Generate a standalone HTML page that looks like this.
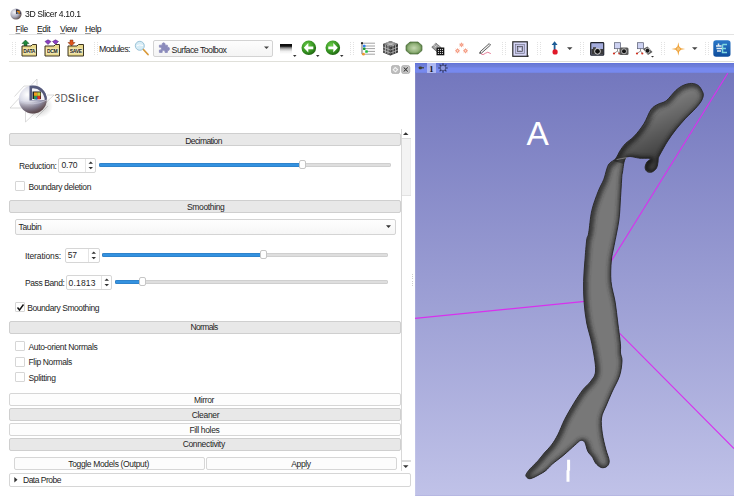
<!DOCTYPE html>
<html><head><meta charset="utf-8">
<style>
html,body{margin:0;padding:0;}
body{width:743px;height:502px;position:relative;overflow:hidden;background:#fff;font-family:"Liberation Sans",sans-serif;color:#1e1e1e;}
.a{position:absolute;}
.t{position:absolute;line-height:10px;font-size:8.5px;white-space:nowrap;letter-spacing:-0.35px;}
.hline{position:absolute;height:1px;background:#e3e3e3;}
.grip{position:absolute;width:4px;height:13px;background:repeating-linear-gradient(90deg,#e2e2e2 0 1px,transparent 1px 3px);-webkit-mask:repeating-linear-gradient(#000 0 1px,transparent 1px 2px);}
.hdr{position:absolute;left:9px;width:389.5px;height:11px;background:#e8e8e8;border:1px solid #cfcfcf;border-radius:2px;}
.btnw{position:absolute;left:9px;width:389.5px;height:11px;background:#fdfdfd;border:1px solid #d6d6d6;border-radius:2px;}
.cb{position:absolute;left:15.2px;width:8px;height:8px;border:1px solid #d6d6d6;background:#fff;border-radius:1px;}
.spin{position:absolute;height:13px;border:1px solid #d6d6d6;border-radius:2px;background:#fff;}
.groove{position:absolute;height:3.7px;background:#dedede;box-shadow:inset 0 0 0 0.7px #cacaca;border-radius:2px;}
.fill{position:absolute;height:3.7px;background:#3492e0;box-shadow:inset 0 0 0 0.6px #2a74b8;border-radius:2px;}
.handle{position:absolute;width:5px;height:7.2px;background:#fff;border:1px solid #c6c6c6;border-radius:2px;}
.u{text-decoration:underline;text-decoration-color:#9a9a9a;text-underline-offset:1px;}
</style></head><body>

<!-- title bar -->
<svg class="a" style="left:10px;top:8px" width="13" height="12" viewBox="0 0 13 12">
<defs><radialGradient id="sg" cx="0.35" cy="0.35" r="0.7"><stop offset="0" stop-color="#f4f4f8"/><stop offset="0.6" stop-color="#a8a8b8"/><stop offset="1" stop-color="#5a4a48"/></radialGradient></defs>
<circle cx="6" cy="6" r="5.6" fill="url(#sg)"/>
<path d="M6 6 L6 1.2 A4.8 4.8 0 0 1 10.8 6Z" fill="#2a2a40"/>
<rect x="6.8" y="2.8" width="3" height="3" fill="#e08a20"/><rect x="6.8" y="4.3" width="1.5" height="1.5" fill="#3070c0"/>
</svg>
<div class="t" style="left:25px;top:9.2px;font-size:9.6px;letter-spacing:-0.4px;color:#111;transform:scaleX(0.9);transform-origin:0 0">3D Slicer 4.10.1</div>

<!-- menu -->
<div class="t" style="left:15.5px;top:23.5px;color:#111"><span class="u">F</span>ile</div>
<div class="t" style="left:37px;top:23.5px;color:#111"><span class="u">E</span>dit</div>
<div class="t" style="left:60px;top:23.5px;color:#111"><span class="u">V</span>iew</div>
<div class="t" style="left:85px;top:23.5px;color:#111"><span class="u">H</span>elp</div>
<div class="hline" style="left:9px;top:34px;width:725px;"></div>

<!-- toolbar -->
<div class="grip" style="left:12px;top:42px"></div>
<div class="grip" style="left:94px;top:42px"></div>
<div class="grip" style="left:350px;top:42px"></div>
<div class="grip" style="left:502px;top:42px"></div>
<div class="grip" style="left:537px;top:42px"></div>
<div class="grip" style="left:580px;top:42px"></div>
<div class="grip" style="left:661px;top:42px"></div>
<div class="grip" style="left:705px;top:42px"></div>

<!-- DATA icon -->
<svg class="a" style="left:21px;top:39px" width="17" height="18" viewBox="0 0 17 18">
<path d="M4.5 1 L8 4.5 H6 V7 H3 V4.5 H1Z" fill="#1f8a3c" stroke="#0d4a1f" stroke-width="0.5"/>
<path d="M1 7 H10 L11.5 5.5 H15.5 V17 H1Z" fill="#e9d98c" stroke="#3d3520" stroke-width="1"/>
<rect x="2" y="9.5" width="12.5" height="5" fill="#f7efc4"/>
<text x="8.2" y="14" font-size="5" text-anchor="middle" font-family="Liberation Sans" font-weight="bold" fill="#222" letter-spacing="-0.3">DATA</text>
</svg>
<!-- DCM icon -->
<svg class="a" style="left:44px;top:39px" width="17" height="18" viewBox="0 0 17 18">
<path d="M1 2.5 L4 0.8 L7 2.5 L4 5.5Z" fill="#8a3fc0" stroke="#4a1a70" stroke-width="0.5"/>
<path d="M8.5 2.5 L11.5 0.8 L14.5 2.5 L11.5 5.5Z" fill="#8a3fc0" stroke="#4a1a70" stroke-width="0.5"/>
<path d="M1 7 H10 L11.5 5.5 H15.5 V17 H1Z" fill="#e9d98c" stroke="#3d3520" stroke-width="1"/>
<rect x="2" y="9.5" width="12.5" height="5" fill="#f7efc4"/>
<text x="8.2" y="14" font-size="5" text-anchor="middle" font-family="Liberation Sans" font-weight="bold" fill="#222" letter-spacing="-0.3">DCM</text>
</svg>
<!-- SAVE icon -->
<svg class="a" style="left:67px;top:39px" width="18" height="18" viewBox="0 0 18 18">
<path d="M3 1 H6 V3.5 H8 L4.5 7 L1 3.5 H3Z" fill="#e0551b" stroke="#7a2a08" stroke-width="0.5"/>
<path d="M1 7 H10 L11.5 5.5 H16.5 V17 H1Z" fill="#e9d98c" stroke="#3d3520" stroke-width="1"/>
<rect x="2" y="9.5" width="13.5" height="5" fill="#f7efc4"/>
<text x="8.7" y="14" font-size="5" text-anchor="middle" font-family="Liberation Sans" font-weight="bold" fill="#222" letter-spacing="-0.3">SAVE</text>
</svg>
<div class="t" style="left:99px;top:44.3px;font-size:8.8px;letter-spacing:-0.62px">Modules:</div>
<!-- magnifier -->
<svg class="a" style="left:134px;top:40px" width="16" height="16" viewBox="0 0 16 16">
<line x1="8.5" y1="8.5" x2="14" y2="14.5" stroke="#d99a3a" stroke-width="1.8" stroke-linecap="round"/>
<circle cx="5.8" cy="5.8" r="4.5" fill="#d6ecf6" stroke="#9cc4d8" stroke-width="1"/>
<path d="M2.5 6 Q5 4 9 5.5" stroke="#fff" stroke-width="1" fill="none"/>
</svg>
<!-- combo -->
<div class="a" style="left:152.7px;top:40px;width:118.8px;height:15px;border:1px solid #d3d3d3;border-radius:2px;background:linear-gradient(#fdfdfd,#f4f4f4)"></div>
<svg class="a" style="left:158px;top:42px" width="12" height="12" viewBox="0 0 12 12">
<path d="M4.2 1.8 a1.5 1.5 0 0 1 2.8 0 V3.2 H9.4 V5.4 a1.5 1.5 0 1 1 0 2.8 V10.4 H7 a1.5 1.5 0 1 0 -2.8 0 H1.4 V8 a1.5 1.5 0 1 0 0 -2.8 V3.2 H4.2Z" fill="#8a8abb" stroke="#8a8abb" stroke-width="0.8" stroke-linejoin="round"/>
</svg>
<div class="t" style="left:171.6px;top:45px;font-size:8.8px;letter-spacing:-0.54px">Surface Toolbox</div>
<svg class="a" style="left:263.5px;top:46px" width="6" height="4"><path d="M0 0.5 H5 L2.5 3Z" fill="#444"/></svg>
<!-- gradient icon -->
<div class="a" style="left:280px;top:44px;width:12px;height:10px;background:linear-gradient(#0a0a0a 0%,#111 22%,#666 32%,#bbb 50%,#eee 72%,#fff 100%)"></div>
<svg class="a" style="left:292.5px;top:55px" width="4" height="3"><path d="M0 0 H3.5 L1.75 2Z" fill="#333"/></svg>
<!-- green arrows -->
<svg class="a" style="left:301px;top:40px" width="16" height="16" viewBox="0 0 16 16">
<defs><radialGradient id="gg" cx="0.4" cy="0.35" r="0.7"><stop offset="0" stop-color="#6cd04a"/><stop offset="0.7" stop-color="#2f8a1c"/><stop offset="1" stop-color="#1d5a10"/></radialGradient></defs>
<circle cx="7.8" cy="7.8" r="7.3" fill="url(#gg)"/>
<path d="M2.8 7.8 L7.3 3 V6.4 H12.3 V9.2 H7.3 V12.6Z" fill="#fff"/>
</svg>
<svg class="a" style="left:316px;top:55px" width="4" height="3"><path d="M0 0 H3.5 L1.75 2Z" fill="#333"/></svg>
<svg class="a" style="left:324.5px;top:40px" width="16" height="16" viewBox="0 0 16 16">
<circle cx="7.8" cy="7.8" r="7.3" fill="url(#gg)"/>
<path d="M12.8 7.8 L8.3 3 V6.4 H3.3 V9.2 H8.3 V12.6Z" fill="#fff"/>
</svg>
<svg class="a" style="left:339.5px;top:55px" width="4" height="3"><path d="M0 0 H3.5 L1.75 2Z" fill="#333"/></svg>
<!-- tree icon -->
<svg class="a" style="left:360px;top:41px" width="16" height="16" viewBox="0 0 16 16">
<path d="M2 2.2 H15 M4.5 5 H15 M4.5 7.6 H15 M6.5 10.4 H15 M4.5 13.2 H15" stroke="#8a8a8a" stroke-width="0.8" fill="none"/>
<path d="M2 2.2 V13.2 H4" stroke="#333" stroke-width="0.7" fill="none"/>
<circle cx="2" cy="2.2" r="1.1" fill="#222"/>
<rect x="3" y="3.8" width="2.5" height="2.5" rx="0.6" fill="#2f80f0"/>
<rect x="3" y="6.4" width="2.5" height="2.5" rx="0.6" fill="#1e9a30"/>
<rect x="5.2" y="9.2" width="2.6" height="2.6" rx="0.6" fill="#22c040"/>
<circle cx="3.5" cy="13.2" r="1.4" fill="#f09a30"/>
</svg>
<!-- cube -->
<svg class="a" style="left:382px;top:40px" width="17" height="16" viewBox="0 0 17 16">
<path d="M8.5 1 L16 4 V12.5 L8.5 15.5 L1 12.5 V4Z" fill="#3a3a3a"/>
<path d="M8.5 1 L16 4 L8.5 7 L1 4Z" fill="#8a8a8a"/>
<path d="M1 4 L8.5 7 V15.5 L1 12.5Z" fill="#555"/>
<path d="M3.5 5 V13.5 M6 6 V14.5 M11 6 V14.5 M13.5 5 V13.5 M1 7 L8.5 10 L16 7 M1 10 L8.5 13 L16 10 M4.5 2.5 L12 5.5 M12.5 2.5 L5 5.5" stroke="#e6e6e6" stroke-width="0.7" fill="none" opacity="0.75"/>
</svg>
<!-- green octagon -->
<svg class="a" style="left:405px;top:41px" width="18" height="14" viewBox="0 0 18 14">
<defs><radialGradient id="og" cx="0.5" cy="0.5" r="0.6"><stop offset="0" stop-color="#c4d8b0"/><stop offset="0.6" stop-color="#90b078"/><stop offset="1" stop-color="#3e6a2a"/></radialGradient></defs>
<path d="M5 1 H13 L17 4.5 V9.5 L13 13 H5 L1 9.5 V4.5Z" fill="url(#og)" stroke="#4a6a3a" stroke-width="0.7"/>
</svg>
<!-- grid icon -->
<svg class="a" style="left:431px;top:42px" width="14" height="14" viewBox="0 0 14 14">
<path d="M0.8 5.2 L4.8 1 L10 5.5 L6 9.8Z" fill="#9a9a9a" stroke="#444" stroke-width="0.6"/>
<path d="M2.8 3.1 L8 7.6 M4.8 1 L1.8 4.2 M6.6 2.6 L3.6 5.8 M8.3 4 L5.3 7.2" stroke="#eee" stroke-width="0.5"/>
<rect x="5.5" y="5.5" width="7.8" height="7.8" fill="#111"/>
<g fill="#fff"><rect x="6.9" y="6.9" width="1" height="1"/><rect x="8.9" y="6.9" width="1" height="1"/><rect x="10.9" y="6.9" width="1" height="1"/>
<rect x="6.9" y="8.9" width="1" height="1"/><rect x="8.9" y="8.9" width="1" height="1"/><rect x="10.9" y="8.9" width="1" height="1"/>
<rect x="6.9" y="10.9" width="1" height="1"/><rect x="8.9" y="10.9" width="1" height="1"/><rect x="10.9" y="10.9" width="1" height="1"/></g>
</svg>
<!-- sparkles -->
<svg class="a" style="left:454px;top:42px" width="15" height="13" viewBox="0 0 15 13" stroke="#f07858" stroke-width="0.6" fill="none">
<path d="M7.5 0.6 V5.2 M5.2 2.9 H9.8 M5.9 1.3 L9.1 4.5 M9.1 1.3 L5.9 4.5"/>
<path d="M3.5 6.3 V11.3 M1 8.8 H6 M1.7 7 L5.3 10.6 M5.3 7 L1.7 10.6"/>
<path d="M11.5 6.3 V11.3 M9 8.8 H14 M9.7 7 L13.3 10.6 M13.3 7 L9.7 10.6"/>
<circle cx="7.5" cy="2.9" r="1" fill="#fbd8cc"/><circle cx="3.5" cy="8.8" r="1.3" fill="#fbd8cc"/><circle cx="11.5" cy="8.8" r="1.3" fill="#fbd8cc"/>
</svg>
<!-- pen -->
<svg class="a" style="left:478px;top:42px" width="14" height="14" viewBox="0 0 14 14">
<path d="M1.8 10 L11.2 1.6 L12.6 3 L3.2 11.4Z" fill="#f0f0f0" stroke="#222" stroke-width="0.7"/>
<path d="M1.8 10 L3.2 11.4 L1.3 11.8Z" fill="#222"/>
<path d="M3 11.8 Q5 13.8 7.3 11.3 Q9.5 9 12.8 11.6" stroke="#e06080" stroke-width="0.8" fill="none"/>
</svg>
<!-- framed icon -->
<svg class="a" style="left:511.5px;top:40.5px" width="17" height="17" viewBox="0 0 17 17">
<rect x="0.8" y="0.8" width="14.5" height="14.5" fill="#d6d6f6" stroke="#2a2a2a" stroke-width="1.2"/>
<rect x="3.6" y="3.6" width="8.8" height="8.8" fill="#c4c4e6" stroke="#6a6a80" stroke-width="0.6"/>
<rect x="5.6" y="5.6" width="4.8" height="4.8" fill="#b4b4d4" stroke="#333" stroke-width="0.6"/>
<rect x="7.3" y="7.3" width="1.5" height="1.6" fill="#fff"/>
<path d="M14.5 16 H16.5 V14Z" fill="#222"/>
</svg>
<!-- pin icon -->
<svg class="a" style="left:550px;top:41px" width="9" height="14" viewBox="0 0 9 14">
<path d="M4.6 0.3 L7.6 4 H5.5 V9 H3.7 V4 H1.6Z" fill="#1c5c96"/>
<circle cx="5.1" cy="10.9" r="2.6" fill="#e01828"/>
</svg>
<svg class="a" style="left:567px;top:46.5px" width="6" height="4"><path d="M0 0.3 H5.5 L2.75 3Z" fill="#444"/></svg>
<!-- cameras -->
<svg class="a" style="left:590px;top:42px" width="15" height="14" viewBox="0 0 15 14">
<rect x="0.7" y="0.7" width="13" height="12.5" rx="0.8" fill="#a4acdc" stroke="#20242e" stroke-width="1.2"/>
<rect x="1.4" y="7" width="11.6" height="5.6" fill="#3a3a3a"/>
<rect x="3" y="5.2" width="3" height="2" fill="#444"/>
<circle cx="7.5" cy="9.3" r="2.9" fill="#141414" stroke="#e6e6e6" stroke-width="0.9"/>
</svg>
<svg class="a" style="left:612px;top:42px" width="17" height="14" viewBox="0 0 17 14">
<rect x="2.5" y="0.7" width="6" height="6" fill="#cdd2f2" stroke="#555a70" stroke-width="0.7"/>
<path d="M5.5 6.7 V9 M2 11.5 L5.5 9 L7.5 11.5" stroke="#555" stroke-width="0.6" fill="none"/>
<circle cx="2" cy="11.5" r="1.1" fill="#d03020"/><circle cx="7.3" cy="11.5" r="1.1" fill="#d03020"/>
<rect x="7.5" y="5.5" width="9" height="7.5" rx="1.5" fill="#5a5a5a"/>
<circle cx="12" cy="9.3" r="2.5" fill="#151515" stroke="#d8d8d8" stroke-width="0.8"/>
</svg>
<svg class="a" style="left:635px;top:42px" width="20" height="16" viewBox="0 0 20 16">
<rect x="2.5" y="0.7" width="6" height="6" fill="#cdd2f2" stroke="#555a70" stroke-width="0.7"/>
<path d="M5.5 6.7 V9 M2 11.5 L5.5 9 L7.5 11.5" stroke="#555" stroke-width="0.6" fill="none"/>
<circle cx="2" cy="11.5" r="1.1" fill="#d03020"/><circle cx="7.3" cy="11.5" r="1.1" fill="#d03020"/>
<path d="M8 7 L12.5 4.5 L17.5 10 L13 13Z" fill="#5a5a5a"/>
<circle cx="12.5" cy="8.7" r="2.4" fill="#151515" stroke="#d0d0d0" stroke-width="0.8"/>
<path d="M16 14 H19 L17.5 15.5Z" fill="#333"/>
</svg>
<!-- crosshair -->
<svg class="a" style="left:671px;top:42px" width="15" height="14" viewBox="0 0 15 14">
<path d="M7.3 0.3 L8.4 5.9 L14.2 7 L8.4 8.1 L7.3 13.7 L6.2 8.1 L0.4 7 L6.2 5.9Z" fill="#f0a030"/>
<circle cx="7.3" cy="7" r="2.2" fill="#f6c478" stroke="#e89428" stroke-width="0.7"/>
</svg>
<svg class="a" style="left:691.5px;top:46.5px" width="6" height="4"><path d="M0 0.3 H5.5 L2.75 3Z" fill="#444"/></svg>
<!-- blue icon -->
<svg class="a" style="left:713px;top:40px" width="18" height="17" viewBox="0 0 18 17">
<defs><linearGradient id="bg1" x1="0" y1="0" x2="0" y2="1"><stop offset="0" stop-color="#2a78c8"/><stop offset="1" stop-color="#0d4c9c"/></linearGradient></defs>
<rect x="0.3" y="0.3" width="17.2" height="16.5" rx="2.8" fill="url(#bg1)"/>
<path d="M9.5 4.5 H14 M9.5 4.5 V12.5 H14 M9.5 8.5 H13" stroke="#7fd8e0" stroke-width="1.5" fill="none"/>
<path d="M5.5 3.5 V5.5 M3 6 H8.5 M3.5 8.5 H9 M4 11 H8" stroke="#e6eef2" stroke-width="1.5"/>
</svg>
<div class="hline" style="left:9px;top:61px;width:725px;background:#e0e0da"></div>

<!-- left panel -->
<!-- float/close buttons -->
<svg class="a" style="left:391px;top:65px" width="20" height="9" viewBox="0 0 20 9">
<rect x="0.4" y="0.4" width="8.2" height="8.2" rx="2.2" fill="#bdbdbd" stroke="#a6a6a6" stroke-width="0.7"/>
<path d="M2.2 4.8 L4.2 2.5 L6.6 4.5 L4.5 6.8Z" fill="none" stroke="#f4f4f4" stroke-width="1.1"/>
<rect x="10.6" y="0.4" width="8.2" height="8.2" rx="2.2" fill="#bdbdbd" stroke="#a6a6a6" stroke-width="0.7"/>
<path d="M12.3 2.1 L17.1 6.9 M17.1 2.1 L12.3 6.9" stroke="#f2f2f2" stroke-width="2"/>
<path d="M12.6 2.4 L16.8 6.6 M16.8 2.4 L12.6 6.6" stroke="#3a3a3a" stroke-width="1.1"/>
</svg>
<!-- logo -->
<svg class="a" style="left:0px;top:70px" width="60" height="60" viewBox="0 70 60 60">
<defs>
<radialGradient id="lg1" cx="0.3" cy="0.32" r="0.85"><stop offset="0" stop-color="#ffffff"/><stop offset="0.35" stop-color="#d8d9e6"/><stop offset="0.65" stop-color="#9a9bb4"/><stop offset="0.85" stop-color="#7a6c74"/><stop offset="1" stop-color="#4a3030"/></radialGradient>
<linearGradient id="lbot" x1="0" y1="0" x2="0" y2="1"><stop offset="0.55" stop-color="#3a2020" stop-opacity="0"/><stop offset="1" stop-color="#3a2020" stop-opacity="0.55"/></linearGradient>
<radialGradient id="lsh" cx="0.5" cy="0.5" r="0.5"><stop offset="0" stop-color="#000" stop-opacity="0.28"/><stop offset="1" stop-color="#000" stop-opacity="0"/></radialGradient>
</defs>
<g stroke="#bdbdbd" stroke-width="0.55" fill="none">
<path d="M10 108 L37 79 V86 M10 108 H22 M14.5 96.5 L24 86 M25.5 112 V122 L54 95 H47 M36 118 L48 106 M24 86 H30"/>
</g>
<ellipse cx="38" cy="106" rx="15" ry="12" fill="url(#lsh)"/>
<circle cx="32.8" cy="99.6" r="14" fill="url(#lg1)"/>
<circle cx="32.8" cy="99.6" r="14" fill="url(#lbot)"/>
<path d="M29.5 100.5 L29.5 85.8 A14 14 0 0 1 46.8 99.8Z" fill="#555a7c"/>
<path d="M32 100 L32 88.4 A11.6 11.6 0 0 1 44.6 100Z" fill="#f2f2f6"/>
<path d="M32.5 99 V91.5 H41 V99Z" fill="#202020"/>
<rect x="34" y="92.4" width="3.2" height="3.5" fill="#f0a020"/><rect x="37.2" y="92.4" width="3.2" height="3.5" fill="#c8d040"/>
<rect x="34" y="95.9" width="3.2" height="3.5" fill="#30a040"/><rect x="37.2" y="95.9" width="3.2" height="3.5" fill="#e03020"/>
<rect x="35.5" y="97.5" width="2" height="2" fill="#2060d0"/>
<path d="M19 101 Q33 107 46.8 100" stroke="#c8c8d8" stroke-width="0.7" fill="none"/>
</svg>
<div class="t" style="left:54.5px;top:94.3px;font-size:10px;letter-spacing:0.35px;color:#5a5a5a">3D<span style="color:#3a3a3a;letter-spacing:1.1px;-webkit-text-stroke:0.2px #3a3a3a">Slicer</span></div>

<!-- scrollbar -->
<div class="a" style="left:401px;top:129px;width:1px;height:342px;background:#d8d8d8"></div>
<svg class="a" style="left:403px;top:131.6px" width="6" height="4"><path d="M0 3 H5.5 L2.75 0.3Z" fill="#333"/></svg>
<div class="a" style="left:402px;top:138.3px;width:8.5px;height:56px;background:#f3f3f3;border-top:1px solid #dcdcdc;border-bottom:1px solid #e2e2e2;box-shadow:inset -0.5px 0 0 #e6e6e6"></div>
<div class="a" style="left:412.3px;top:273.5px;width:1px;height:13px;background:repeating-linear-gradient(#cfcfcf 0 1px,transparent 1px 2.2px)"></div>
<div class="a" style="left:402px;top:460px;width:9px;height:2px;background:#dcdcdc"></div>
<svg class="a" style="left:403px;top:465px" width="6" height="4"><path d="M0 0.3 H5.5 L2.75 3Z" fill="#333"/></svg>

<!-- Decimation -->
<div class="hdr" style="top:133px"></div>
<div class="t" style="left:185.3px;top:136.2px;letter-spacing:-0.6px">Decimation</div>
<div class="t" style="left:19px;top:160.8px;letter-spacing:-0.3px">Reduction:</div>
<div class="spin" style="left:58px;top:157.5px;width:36px"></div>
<div class="a" style="left:85px;top:158.5px;width:1px;height:13px;background:#e4e4e4"></div>
<div class="t" style="left:61.6px;top:160.3px;letter-spacing:-0.2px">0.70</div>
<svg class="a" style="left:87.5px;top:160.5px" width="6" height="9"><path d="M0.5 2.8 L2.75 0.5 L5 2.8Z M0.5 6 L2.75 8.3 L5 6Z" fill="#333"/></svg>
<div class="groove" style="left:99px;top:163px;width:292px"></div>
<div class="fill" style="left:99px;top:163px;width:202px"></div>
<div class="handle" style="left:299px;top:160.2px"></div>
<div class="cb" style="top:181px"></div>
<div class="t" style="left:28.5px;top:182px">Boundary deletion</div>

<!-- Smoothing -->
<div class="hdr" style="top:199.5px"></div>
<div class="t" style="left:187px;top:202px">Smoothing</div>
<div class="a" style="left:15px;top:218.5px;width:379px;height:14px;border:1px solid #d4d4d4;border-radius:2px;background:linear-gradient(#fefefe,#f6f6f6)"></div>
<div class="t" style="left:18.5px;top:222.2px">Taubin</div>
<svg class="a" style="left:386px;top:225px" width="6" height="4"><path d="M0 0.3 H5 L2.5 3Z" fill="#333"/></svg>

<div class="t" style="left:25px;top:250.6px;letter-spacing:-0.12px">Iterations:</div>
<div class="spin" style="left:64.5px;top:247.8px;width:33px"></div>
<div class="a" style="left:88px;top:248.8px;width:1px;height:13px;background:#e4e4e4"></div>
<div class="t" style="left:67.8px;top:250.4px">57</div>
<svg class="a" style="left:90.5px;top:250.8px" width="6" height="9"><path d="M0.5 2.8 L2.75 0.5 L5 2.8Z M0.5 6 L2.75 8.3 L5 6Z" fill="#333"/></svg>
<div class="groove" style="left:102px;top:253.1px;width:285.5px"></div>
<div class="fill" style="left:102px;top:253.1px;width:161px"></div>
<div class="handle" style="left:260.3px;top:250.3px"></div>

<div class="t" style="left:25px;top:277.6px;letter-spacing:-0.4px">Pass Band:</div>
<div class="spin" style="left:65.5px;top:275px;width:44px"></div>
<div class="a" style="left:101px;top:276px;width:1px;height:13px;background:#e4e4e4"></div>
<div class="t" style="left:68.5px;top:277.8px;letter-spacing:0.2px">0.1813</div>
<svg class="a" style="left:103.5px;top:278px" width="6" height="9"><path d="M0.5 2.8 L2.75 0.5 L5 2.8Z M0.5 6 L2.75 8.3 L5 6Z" fill="#333"/></svg>
<div class="groove" style="left:114.5px;top:280.1px;width:273px"></div>
<div class="fill" style="left:114.5px;top:280.1px;width:27px"></div>
<div class="handle" style="left:138.8px;top:277.2px"></div>

<div class="cb" style="top:302px"></div>
<svg class="a" style="left:16px;top:303px" width="9" height="9"><path d="M1.5 4.5 L3.5 7 L7.5 1.5" stroke="#111" stroke-width="1.4" fill="none"/></svg>
<div class="t" style="left:27.2px;top:303px;letter-spacing:-0.42px">Boundary Smoothing</div>

<!-- Normals -->
<div class="hdr" style="top:321px"></div>
<div class="t" style="left:190.5px;top:322.3px;letter-spacing:-0.65px">Normals</div>
<div class="cb" style="top:341.3px"></div>
<div class="t" style="left:28.5px;top:341.8px">Auto-orient Normals</div>
<div class="cb" style="top:356.8px"></div>
<div class="t" style="left:28.5px;top:357.3px">Flip Normals</div>
<div class="cb" style="top:372.2px"></div>
<div class="t" style="left:28.5px;top:372.9px">Splitting</div>

<div class="btnw" style="top:393px"></div>
<div class="t" style="left:194px;top:394.6px">Mirror</div>
<div class="hdr" style="top:408px"></div>
<div class="t" style="left:191.8px;top:409.8px">Cleaner</div>
<div class="btnw" style="top:423px"></div>
<div class="t" style="left:189.4px;top:424.9px">Fill holes</div>
<div class="hdr" style="top:438px"></div>
<div class="t" style="left:182.7px;top:439.4px">Connectivity</div>

<div class="a" style="left:13.5px;top:456.8px;width:189px;height:11.5px;border:1px solid #d6d6d6;border-radius:2px;background:#fcfcfc"></div>
<div class="t" style="left:68.3px;top:458.9px">Toggle Models (Output)</div>
<div class="a" style="left:206px;top:456.8px;width:188.5px;height:11.5px;border:1px solid #d6d6d6;border-radius:2px;background:#fcfcfc"></div>
<div class="t" style="left:291.2px;top:458.9px">Apply</div>

<div class="a" style="left:9.3px;top:473px;width:399.5px;height:11.5px;border:1px solid #d6d6d6;border-radius:2px;background:#fff"></div>
<svg class="a" style="left:13.5px;top:477px" width="4" height="6"><path d="M0.3 0 L3.5 2.75 L0.3 5.5Z" fill="#333"/></svg>
<div class="t" style="left:23px;top:474.9px;letter-spacing:-0.5px">Data Probe</div>

<!-- 3D view -->
<div class="a" style="left:415px;top:62.5px;width:319px;height:433.5px;background:linear-gradient(#7276bd 0%,#7478be 3%,#c0c2e8 100%)"></div>
<div class="a" style="left:415px;top:73px;width:1px;height:423px;background:rgba(255,255,255,0.12)"></div>
<div class="a" style="left:415px;top:495px;width:319px;height:1px;background:rgba(60,60,160,0.08)"></div>
<div class="a" style="left:415px;top:62.5px;width:319px;height:10.5px;background:linear-gradient(#5d70dc 0,#6a7ad6 12%,#6f80dc 40%,#7789ee 50%,#7789ee 90%,#7080d8 100%)"></div>
<div class="a" style="left:427px;top:62.8px;width:8.7px;height:10.5px;background:#aeb8f2"></div>
<svg class="a" style="left:418px;top:66px" width="7" height="4" viewBox="0 0 7 4"><path d="M0.5 1.8 H6" stroke="#3e3e30" stroke-width="1.2"/><rect x="1" y="0.6" width="2.8" height="2.6" rx="0.6" fill="#3e3e30"/></svg>
<div class="t" style="left:429.3px;top:63.5px;font-size:8.5px;color:#111;font-weight:bold;font-family:'Liberation Serif',serif">1</div>
<svg class="a" style="left:437.5px;top:63px" width="10" height="10" viewBox="0 0 10 10">
<path d="M5 0.2 V9.8 M0.2 5 H9.8 M1.6 1.6 L8.4 8.4 M8.4 1.6 L1.6 8.4" stroke="#2e3560" stroke-width="1.2"/>
<circle cx="5" cy="5" r="2.8" fill="#8c96dc" stroke="#3a4070" stroke-width="0.8"/>
</svg>
<svg class="a" style="left:0;top:0" width="743" height="502" viewBox="0 0 743 502">
<defs>
<clipPath id="vc"><rect x="415" y="73" width="319" height="423"/></clipPath>
<linearGradient id="lobeg" gradientUnits="userSpaceOnUse" x1="650" y1="110" x2="668" y2="150"><stop offset="0" stop-color="#000" stop-opacity="0"/><stop offset="1" stop-color="#000" stop-opacity="0.45"/></linearGradient>
<filter id="blr2" x="-30%" y="-30%" width="160%" height="160%"><feGaussianBlur stdDeviation="1.3"/><feOffset dy="-1"/></filter>
<filter id="blr" x="-20%" y="-20%" width="140%" height="140%"><feGaussianBlur stdDeviation="2"/><feOffset dx="1.2" dy="1"/></filter>
</defs>
<g clip-path="url(#vc)">
<path d="M727.8 73.2 L611 261.5" stroke="#d830ee" stroke-width="1.1"/>
<path d="M415 318.4 L590 300.9" stroke="#d830ee" stroke-width="1.1"/>
<path d="M619.7 333.3 L734 448.6" stroke="#d830ee" stroke-width="1.1"/>
<clipPath id="vsc"><path d="M683.0 85.5 C685.5 84.3 688.8 83.4 691.3 83.4 C693.8 83.4 696.4 84.1 698.3 85.5 C700.2 86.9 701.7 90.0 702.5 91.7 C703.3 93.4 703.5 94.3 703.2 95.9 C703.0 97.5 702.3 99.4 701.0 101.5 C699.7 103.6 698.0 105.6 695.5 108.4 C693.0 111.2 689.0 114.7 685.7 118.2 C682.5 121.7 679.0 125.6 676.0 129.4 C673.0 133.2 670.3 136.9 667.7 141.0 C665.1 145.1 661.8 151.2 660.2 154.1 C658.6 157.0 658.7 157.1 658.3 158.4 C657.9 159.7 658.3 160.4 658.0 162.0 C657.7 163.6 657.5 166.3 656.5 168.0 C655.5 169.7 653.6 171.4 652.0 172.0 C650.4 172.6 648.1 172.3 647.0 171.5 C645.9 170.7 645.1 168.9 645.1 167.3 C645.1 165.7 646.1 163.4 647.0 162.0 C647.9 160.6 651.5 159.2 650.3 158.6 C649.1 158.0 644.0 158.4 640.0 158.2 C636.0 158.0 629.2 155.1 626.3 157.4 C623.4 159.7 623.3 168.2 622.5 172.0 C621.7 175.8 621.9 175.7 621.6 180.0 C621.3 184.3 621.0 191.1 620.5 197.8 C620.0 204.5 620.0 212.1 618.9 220.0 C617.8 227.9 615.4 238.7 614.1 245.5 C612.8 252.3 611.8 255.0 611.3 261.0 C610.8 267.0 610.4 274.6 611.0 281.5 C611.6 288.4 614.1 295.4 615.2 302.3 C616.3 309.2 616.9 316.1 617.8 323.0 C618.7 329.9 619.9 338.8 620.4 343.8 C620.9 348.8 620.2 350.1 620.5 353.0 C620.8 355.9 622.2 357.2 622.0 361.0 C621.8 364.8 621.2 370.8 619.5 376.0 C617.8 381.2 614.2 387.0 612.0 392.0 C609.8 397.0 607.8 401.7 606.0 406.0 C604.2 410.3 602.1 413.5 601.5 418.0 C600.9 422.5 601.6 428.0 602.3 433.2 C603.0 438.4 604.6 444.6 605.8 449.2 C606.9 453.8 609.0 457.8 609.2 460.7 C609.4 463.6 608.2 465.3 606.9 466.4 C605.6 467.5 603.1 468.1 601.2 467.5 C599.3 466.9 596.9 464.7 595.5 463.0 C594.1 461.3 593.9 459.2 592.6 457.3 C591.3 455.4 589.1 453.8 587.8 451.3 C586.5 448.8 586.0 444.1 584.8 442.3 C583.6 440.5 582.3 440.0 580.6 440.5 C578.9 441.0 577.5 442.9 574.7 445.3 C571.9 447.7 567.6 451.8 563.9 454.9 C560.2 458.0 555.3 461.5 552.3 464.1 C549.3 466.7 548.0 468.8 545.9 470.5 C543.8 472.2 541.8 473.2 539.5 474.5 C537.2 475.8 534.1 477.4 532.3 478.1 C530.4 478.8 529.4 478.8 528.4 478.5 C527.4 478.2 526.3 476.9 526.0 476.1 C525.7 475.3 525.7 474.9 526.4 473.7 C527.1 472.5 528.1 471.0 530.0 468.9 C531.9 466.8 535.5 463.5 537.9 460.9 C540.3 458.2 542.0 455.6 544.3 453.0 C546.6 450.4 549.2 448.1 551.5 445.0 C553.8 441.9 555.7 438.9 557.9 434.6 C560.1 430.4 562.0 424.7 564.6 419.5 C567.2 414.3 570.7 408.5 573.7 403.5 C576.8 398.5 580.0 393.4 582.9 389.7 C585.8 385.9 588.9 384.3 591.0 381.0 C593.1 377.7 595.5 376.2 595.6 370.0 C595.8 363.8 593.4 351.6 591.9 343.8 C590.4 336.0 588.0 329.9 586.7 323.0 C585.4 316.1 584.6 309.2 584.1 302.3 C583.6 295.4 583.5 288.4 583.6 281.5 C583.7 274.6 584.4 267.7 584.9 260.8 C585.4 253.9 586.1 244.7 586.7 240.0 C587.3 235.3 587.9 237.7 588.7 232.8 C589.6 227.9 590.2 217.4 591.8 210.5 C593.4 203.6 596.2 196.6 598.2 191.4 C600.2 186.2 602.3 183.2 603.7 179.6 C605.1 176.0 605.6 172.7 606.5 170.0 C607.4 167.3 607.7 165.5 609.3 163.6 C610.9 161.7 614.2 160.4 615.9 158.4 C617.6 156.4 618.1 153.7 619.7 151.3 C621.3 148.9 622.9 146.3 625.3 143.8 C627.7 141.3 631.1 139.6 634.2 136.3 C637.3 133.0 641.1 128.2 643.9 123.8 C646.7 119.4 648.6 113.0 650.9 109.8 C653.2 106.5 655.3 105.8 657.9 104.3 C660.5 102.8 663.2 103.1 666.2 100.8 C669.2 98.5 673.2 92.8 676.0 90.3 C678.8 87.8 680.5 86.7 683.0 85.5Z"/></clipPath>
<path d="M683.0 85.5 C685.5 84.3 688.8 83.4 691.3 83.4 C693.8 83.4 696.4 84.1 698.3 85.5 C700.2 86.9 701.7 90.0 702.5 91.7 C703.3 93.4 703.5 94.3 703.2 95.9 C703.0 97.5 702.3 99.4 701.0 101.5 C699.7 103.6 698.0 105.6 695.5 108.4 C693.0 111.2 689.0 114.7 685.7 118.2 C682.5 121.7 679.0 125.6 676.0 129.4 C673.0 133.2 670.3 136.9 667.7 141.0 C665.1 145.1 661.8 151.2 660.2 154.1 C658.6 157.0 658.7 157.1 658.3 158.4 C657.9 159.7 658.3 160.4 658.0 162.0 C657.7 163.6 657.5 166.3 656.5 168.0 C655.5 169.7 653.6 171.4 652.0 172.0 C650.4 172.6 648.1 172.3 647.0 171.5 C645.9 170.7 645.1 168.9 645.1 167.3 C645.1 165.7 646.1 163.4 647.0 162.0 C647.9 160.6 651.5 159.2 650.3 158.6 C649.1 158.0 644.0 158.4 640.0 158.2 C636.0 158.0 629.2 155.1 626.3 157.4 C623.4 159.7 623.3 168.2 622.5 172.0 C621.7 175.8 621.9 175.7 621.6 180.0 C621.3 184.3 621.0 191.1 620.5 197.8 C620.0 204.5 620.0 212.1 618.9 220.0 C617.8 227.9 615.4 238.7 614.1 245.5 C612.8 252.3 611.8 255.0 611.3 261.0 C610.8 267.0 610.4 274.6 611.0 281.5 C611.6 288.4 614.1 295.4 615.2 302.3 C616.3 309.2 616.9 316.1 617.8 323.0 C618.7 329.9 619.9 338.8 620.4 343.8 C620.9 348.8 620.2 350.1 620.5 353.0 C620.8 355.9 622.2 357.2 622.0 361.0 C621.8 364.8 621.2 370.8 619.5 376.0 C617.8 381.2 614.2 387.0 612.0 392.0 C609.8 397.0 607.8 401.7 606.0 406.0 C604.2 410.3 602.1 413.5 601.5 418.0 C600.9 422.5 601.6 428.0 602.3 433.2 C603.0 438.4 604.6 444.6 605.8 449.2 C606.9 453.8 609.0 457.8 609.2 460.7 C609.4 463.6 608.2 465.3 606.9 466.4 C605.6 467.5 603.1 468.1 601.2 467.5 C599.3 466.9 596.9 464.7 595.5 463.0 C594.1 461.3 593.9 459.2 592.6 457.3 C591.3 455.4 589.1 453.8 587.8 451.3 C586.5 448.8 586.0 444.1 584.8 442.3 C583.6 440.5 582.3 440.0 580.6 440.5 C578.9 441.0 577.5 442.9 574.7 445.3 C571.9 447.7 567.6 451.8 563.9 454.9 C560.2 458.0 555.3 461.5 552.3 464.1 C549.3 466.7 548.0 468.8 545.9 470.5 C543.8 472.2 541.8 473.2 539.5 474.5 C537.2 475.8 534.1 477.4 532.3 478.1 C530.4 478.8 529.4 478.8 528.4 478.5 C527.4 478.2 526.3 476.9 526.0 476.1 C525.7 475.3 525.7 474.9 526.4 473.7 C527.1 472.5 528.1 471.0 530.0 468.9 C531.9 466.8 535.5 463.5 537.9 460.9 C540.3 458.2 542.0 455.6 544.3 453.0 C546.6 450.4 549.2 448.1 551.5 445.0 C553.8 441.9 555.7 438.9 557.9 434.6 C560.1 430.4 562.0 424.7 564.6 419.5 C567.2 414.3 570.7 408.5 573.7 403.5 C576.8 398.5 580.0 393.4 582.9 389.7 C585.8 385.9 588.9 384.3 591.0 381.0 C593.1 377.7 595.5 376.2 595.6 370.0 C595.8 363.8 593.4 351.6 591.9 343.8 C590.4 336.0 588.0 329.9 586.7 323.0 C585.4 316.1 584.6 309.2 584.1 302.3 C583.6 295.4 583.5 288.4 583.6 281.5 C583.7 274.6 584.4 267.7 584.9 260.8 C585.4 253.9 586.1 244.7 586.7 240.0 C587.3 235.3 587.9 237.7 588.7 232.8 C589.6 227.9 590.2 217.4 591.8 210.5 C593.4 203.6 596.2 196.6 598.2 191.4 C600.2 186.2 602.3 183.2 603.7 179.6 C605.1 176.0 605.6 172.7 606.5 170.0 C607.4 167.3 607.7 165.5 609.3 163.6 C610.9 161.7 614.2 160.4 615.9 158.4 C617.6 156.4 618.1 153.7 619.7 151.3 C621.3 148.9 622.9 146.3 625.3 143.8 C627.7 141.3 631.1 139.6 634.2 136.3 C637.3 133.0 641.1 128.2 643.9 123.8 C646.7 119.4 648.6 113.0 650.9 109.8 C653.2 106.5 655.3 105.8 657.9 104.3 C660.5 102.8 663.2 103.1 666.2 100.8 C669.2 98.5 673.2 92.8 676.0 90.3 C678.8 87.8 680.5 86.7 683.0 85.5Z" fill="#787878"/>
<g clip-path="url(#vsc)"><path d="M683.0 85.5 C685.5 84.3 688.8 83.4 691.3 83.4 C693.8 83.4 696.4 84.1 698.3 85.5 C700.2 86.9 701.7 90.0 702.5 91.7 C703.3 93.4 703.5 94.3 703.2 95.9 C703.0 97.5 702.3 99.4 701.0 101.5 C699.7 103.6 698.0 105.6 695.5 108.4 C693.0 111.2 689.0 114.7 685.7 118.2 C682.5 121.7 679.0 125.6 676.0 129.4 C673.0 133.2 670.3 136.9 667.7 141.0 C665.1 145.1 661.8 151.2 660.2 154.1 C658.6 157.0 658.7 157.1 658.3 158.4 C657.9 159.7 658.3 160.4 658.0 162.0 C657.7 163.6 657.5 166.3 656.5 168.0 C655.5 169.7 653.6 171.4 652.0 172.0 C650.4 172.6 648.1 172.3 647.0 171.5 C645.9 170.7 645.1 168.9 645.1 167.3 C645.1 165.7 646.1 163.4 647.0 162.0 C647.9 160.6 651.5 159.2 650.3 158.6 C649.1 158.0 644.0 158.4 640.0 158.2 C636.0 158.0 629.2 155.1 626.3 157.4 C623.4 159.7 623.3 168.2 622.5 172.0 C621.7 175.8 621.9 175.7 621.6 180.0 C621.3 184.3 621.0 191.1 620.5 197.8 C620.0 204.5 620.0 212.1 618.9 220.0 C617.8 227.9 615.4 238.7 614.1 245.5 C612.8 252.3 611.8 255.0 611.3 261.0 C610.8 267.0 610.4 274.6 611.0 281.5 C611.6 288.4 614.1 295.4 615.2 302.3 C616.3 309.2 616.9 316.1 617.8 323.0 C618.7 329.9 619.9 338.8 620.4 343.8 C620.9 348.8 620.2 350.1 620.5 353.0 C620.8 355.9 622.2 357.2 622.0 361.0 C621.8 364.8 621.2 370.8 619.5 376.0 C617.8 381.2 614.2 387.0 612.0 392.0 C609.8 397.0 607.8 401.7 606.0 406.0 C604.2 410.3 602.1 413.5 601.5 418.0 C600.9 422.5 601.6 428.0 602.3 433.2 C603.0 438.4 604.6 444.6 605.8 449.2 C606.9 453.8 609.0 457.8 609.2 460.7 C609.4 463.6 608.2 465.3 606.9 466.4 C605.6 467.5 603.1 468.1 601.2 467.5 C599.3 466.9 596.9 464.7 595.5 463.0 C594.1 461.3 593.9 459.2 592.6 457.3 C591.3 455.4 589.1 453.8 587.8 451.3 C586.5 448.8 586.0 444.1 584.8 442.3 C583.6 440.5 582.3 440.0 580.6 440.5 C578.9 441.0 577.5 442.9 574.7 445.3 C571.9 447.7 567.6 451.8 563.9 454.9 C560.2 458.0 555.3 461.5 552.3 464.1 C549.3 466.7 548.0 468.8 545.9 470.5 C543.8 472.2 541.8 473.2 539.5 474.5 C537.2 475.8 534.1 477.4 532.3 478.1 C530.4 478.8 529.4 478.8 528.4 478.5 C527.4 478.2 526.3 476.9 526.0 476.1 C525.7 475.3 525.7 474.9 526.4 473.7 C527.1 472.5 528.1 471.0 530.0 468.9 C531.9 466.8 535.5 463.5 537.9 460.9 C540.3 458.2 542.0 455.6 544.3 453.0 C546.6 450.4 549.2 448.1 551.5 445.0 C553.8 441.9 555.7 438.9 557.9 434.6 C560.1 430.4 562.0 424.7 564.6 419.5 C567.2 414.3 570.7 408.5 573.7 403.5 C576.8 398.5 580.0 393.4 582.9 389.7 C585.8 385.9 588.9 384.3 591.0 381.0 C593.1 377.7 595.5 376.2 595.6 370.0 C595.8 363.8 593.4 351.6 591.9 343.8 C590.4 336.0 588.0 329.9 586.7 323.0 C585.4 316.1 584.6 309.2 584.1 302.3 C583.6 295.4 583.5 288.4 583.6 281.5 C583.7 274.6 584.4 267.7 584.9 260.8 C585.4 253.9 586.1 244.7 586.7 240.0 C587.3 235.3 587.9 237.7 588.7 232.8 C589.6 227.9 590.2 217.4 591.8 210.5 C593.4 203.6 596.2 196.6 598.2 191.4 C600.2 186.2 602.3 183.2 603.7 179.6 C605.1 176.0 605.6 172.7 606.5 170.0 C607.4 167.3 607.7 165.5 609.3 163.6 C610.9 161.7 614.2 160.4 615.9 158.4 C617.6 156.4 618.1 153.7 619.7 151.3 C621.3 148.9 622.9 146.3 625.3 143.8 C627.7 141.3 631.1 139.6 634.2 136.3 C637.3 133.0 641.1 128.2 643.9 123.8 C646.7 119.4 648.6 113.0 650.9 109.8 C653.2 106.5 655.3 105.8 657.9 104.3 C660.5 102.8 663.2 103.1 666.2 100.8 C669.2 98.5 673.2 92.8 676.0 90.3 C678.8 87.8 680.5 86.7 683.0 85.5Z" fill="none" stroke="#2a2a2a" stroke-width="5" filter="url(#blr)"/><path d="M610 160 L700 70 L740 110 L662 175Z" fill="url(#lobeg)"/></g>
<path d="M683.0 85.5 C685.5 84.3 688.8 83.4 691.3 83.4 C693.8 83.4 696.4 84.1 698.3 85.5 C700.2 86.9 701.7 90.0 702.5 91.7 C703.3 93.4 703.5 94.3 703.2 95.9 C703.0 97.5 702.3 99.4 701.0 101.5 C699.7 103.6 698.0 105.6 695.5 108.4 C693.0 111.2 689.0 114.7 685.7 118.2 C682.5 121.7 679.0 125.6 676.0 129.4 C673.0 133.2 670.3 136.9 667.7 141.0 C665.1 145.1 661.8 151.2 660.2 154.1 C658.6 157.0 658.7 157.1 658.3 158.4 C657.9 159.7 658.3 160.4 658.0 162.0 C657.7 163.6 657.5 166.3 656.5 168.0 C655.5 169.7 653.6 171.4 652.0 172.0 C650.4 172.6 648.1 172.3 647.0 171.5 C645.9 170.7 645.1 168.9 645.1 167.3 C645.1 165.7 646.1 163.4 647.0 162.0 C647.9 160.6 651.5 159.2 650.3 158.6 C649.1 158.0 644.0 158.4 640.0 158.2 C636.0 158.0 629.2 155.1 626.3 157.4 C623.4 159.7 623.3 168.2 622.5 172.0 C621.7 175.8 621.9 175.7 621.6 180.0 C621.3 184.3 621.0 191.1 620.5 197.8 C620.0 204.5 620.0 212.1 618.9 220.0 C617.8 227.9 615.4 238.7 614.1 245.5 C612.8 252.3 611.8 255.0 611.3 261.0 C610.8 267.0 610.4 274.6 611.0 281.5 C611.6 288.4 614.1 295.4 615.2 302.3 C616.3 309.2 616.9 316.1 617.8 323.0 C618.7 329.9 619.9 338.8 620.4 343.8 C620.9 348.8 620.2 350.1 620.5 353.0 C620.8 355.9 622.2 357.2 622.0 361.0 C621.8 364.8 621.2 370.8 619.5 376.0 C617.8 381.2 614.2 387.0 612.0 392.0 C609.8 397.0 607.8 401.7 606.0 406.0 C604.2 410.3 602.1 413.5 601.5 418.0 C600.9 422.5 601.6 428.0 602.3 433.2 C603.0 438.4 604.6 444.6 605.8 449.2 C606.9 453.8 609.0 457.8 609.2 460.7 C609.4 463.6 608.2 465.3 606.9 466.4 C605.6 467.5 603.1 468.1 601.2 467.5 C599.3 466.9 596.9 464.7 595.5 463.0 C594.1 461.3 593.9 459.2 592.6 457.3 C591.3 455.4 589.1 453.8 587.8 451.3 C586.5 448.8 586.0 444.1 584.8 442.3 C583.6 440.5 582.3 440.0 580.6 440.5 C578.9 441.0 577.5 442.9 574.7 445.3 C571.9 447.7 567.6 451.8 563.9 454.9 C560.2 458.0 555.3 461.5 552.3 464.1 C549.3 466.7 548.0 468.8 545.9 470.5 C543.8 472.2 541.8 473.2 539.5 474.5 C537.2 475.8 534.1 477.4 532.3 478.1 C530.4 478.8 529.4 478.8 528.4 478.5 C527.4 478.2 526.3 476.9 526.0 476.1 C525.7 475.3 525.7 474.9 526.4 473.7 C527.1 472.5 528.1 471.0 530.0 468.9 C531.9 466.8 535.5 463.5 537.9 460.9 C540.3 458.2 542.0 455.6 544.3 453.0 C546.6 450.4 549.2 448.1 551.5 445.0 C553.8 441.9 555.7 438.9 557.9 434.6 C560.1 430.4 562.0 424.7 564.6 419.5 C567.2 414.3 570.7 408.5 573.7 403.5 C576.8 398.5 580.0 393.4 582.9 389.7 C585.8 385.9 588.9 384.3 591.0 381.0 C593.1 377.7 595.5 376.2 595.6 370.0 C595.8 363.8 593.4 351.6 591.9 343.8 C590.4 336.0 588.0 329.9 586.7 323.0 C585.4 316.1 584.6 309.2 584.1 302.3 C583.6 295.4 583.5 288.4 583.6 281.5 C583.7 274.6 584.4 267.7 584.9 260.8 C585.4 253.9 586.1 244.7 586.7 240.0 C587.3 235.3 587.9 237.7 588.7 232.8 C589.6 227.9 590.2 217.4 591.8 210.5 C593.4 203.6 596.2 196.6 598.2 191.4 C600.2 186.2 602.3 183.2 603.7 179.6 C605.1 176.0 605.6 172.7 606.5 170.0 C607.4 167.3 607.7 165.5 609.3 163.6 C610.9 161.7 614.2 160.4 615.9 158.4 C617.6 156.4 618.1 153.7 619.7 151.3 C621.3 148.9 622.9 146.3 625.3 143.8 C627.7 141.3 631.1 139.6 634.2 136.3 C637.3 133.0 641.1 128.2 643.9 123.8 C646.7 119.4 648.6 113.0 650.9 109.8 C653.2 106.5 655.3 105.8 657.9 104.3 C660.5 102.8 663.2 103.1 666.2 100.8 C669.2 98.5 673.2 92.8 676.0 90.3 C678.8 87.8 680.5 86.7 683.0 85.5Z" fill="none" stroke="#262626" stroke-width="0.9"/>
</g>
<path d="M616.5 159.6 Q621 158.6 627 157.6" stroke="#9a9a9a" stroke-width="0.7" fill="none"/>
<text x="526.5" y="145.2" font-family="Liberation Sans" font-size="33.5" fill="#fff">A</text>
<path d="M568.6 459.7 V470.8 M568 470.2 V481.8" stroke="#fff" stroke-width="3"/>
</svg>
</body></html>
